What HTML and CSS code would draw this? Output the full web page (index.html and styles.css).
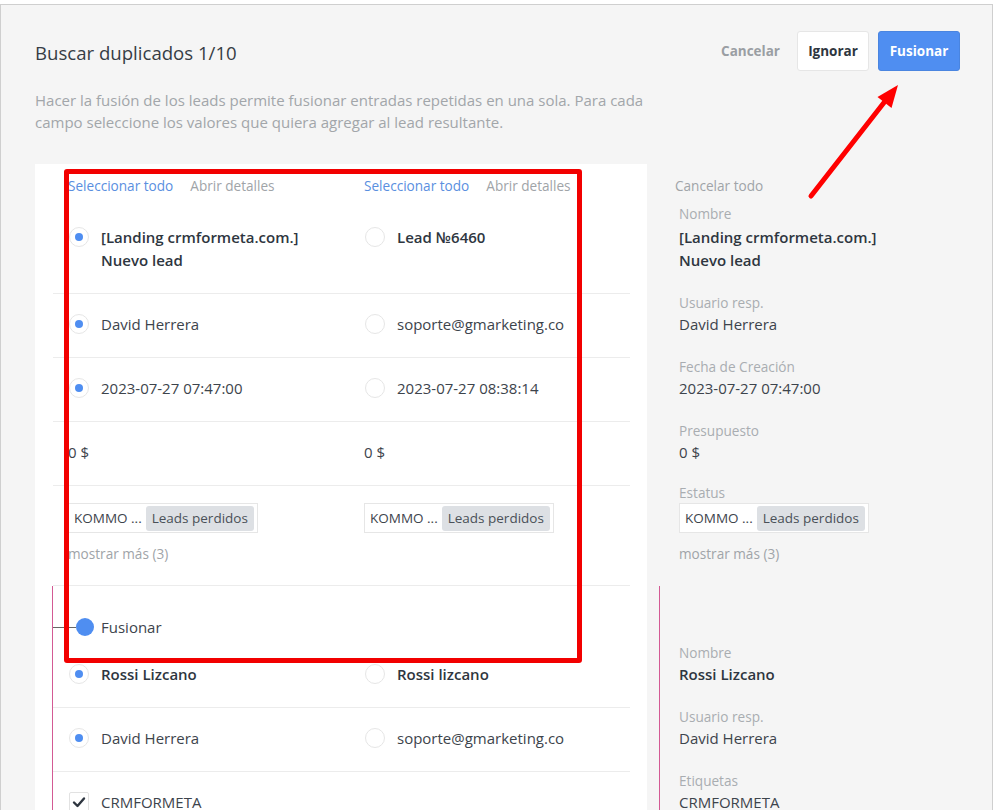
FILE: index.html
```html
<!DOCTYPE html>
<html lang="es">
<head>
<meta charset="utf-8">
<title>Buscar duplicados</title>
<link rel="stylesheet" href="styles.css">
</head>
<body>
<div class="modal">
  <header class="modal-head">
    <h1 class="title">Buscar duplicados 1/10</h1>
    <div class="actions">
      <button class="btn-link">Cancelar</button>
      <button class="btn btn-white">Ignorar</button>
      <button class="btn btn-blue">Fusionar</button>
    </div>
  </header>
  <p class="desc">Hacer la fusión de los leads permite fusionar entradas repetidas en una sola. Para cada campo seleccione los valores que quiera agregar al lead resultante.</p>

  <div class="merge">
    <!-- group 1 -->
    <div class="left">
      <div class="rows">
        <div class="row row-head">
          <div class="cell"><a class="link-blue">Seleccionar todo</a><a class="link-grey">Abrir detalles</a></div>
          <div class="cell"><a class="link-blue">Seleccionar todo</a><a class="link-grey">Abrir detalles</a></div>
        </div>
        <div class="row">
          <div class="cell"><span class="radio on"></span><span class="val bold">[Landing crmformeta.com.]<br>Nuevo lead</span></div>
          <div class="cell"><span class="radio"></span><span class="val bold">Lead №6460</span></div>
        </div>
        <div class="row">
          <div class="cell"><span class="radio on"></span><span class="val">David Herrera</span></div>
          <div class="cell"><span class="radio"></span><span class="val">soporte@gmarketing.co</span></div>
        </div>
        <div class="row">
          <div class="cell"><span class="radio on"></span><span class="val">2023-07-27 07:47:00</span></div>
          <div class="cell"><span class="radio"></span><span class="val">2023-07-27 08:38:14</span></div>
        </div>
        <div class="row">
          <div class="cell"><span class="val">0 $</span></div>
          <div class="cell"><span class="val">0 $</span></div>
        </div>
        <div class="row row-status">
          <div class="cell cell-col">
            <span class="status"><span class="status-pipe">KOMMO ...</span><span class="status-tag">Leads perdidos</span></span>
            <span class="more">mostrar más (3)</span>
          </div>
          <div class="cell cell-col">
            <span class="status"><span class="status-pipe">KOMMO ...</span><span class="status-tag">Leads perdidos</span></span>
          </div>
        </div>
      </div>
    </div>
    <div class="right">
      <div class="summary">
        <div class="summary-head">Cancelar todo</div>
        <div class="field field-first"><div class="label">Nombre</div><div class="value bold">[Landing crmformeta.com.]<br>Nuevo lead</div></div>
        <div class="field"><div class="label">Usuario resp.</div><div class="value">David Herrera</div></div>
        <div class="field"><div class="label">Fecha de Creación</div><div class="value">2023-07-27 07:47:00</div></div>
        <div class="field"><div class="label">Presupuesto</div><div class="value">0 $</div></div>
        <div class="field field-status"><div class="label">Estatus</div>
          <span class="status"><span class="status-pipe">KOMMO ...</span><span class="status-tag">Leads perdidos</span></span>
          <div class="more">mostrar más (3)</div>
        </div>
      </div>
    </div>

    <!-- group 2 -->
    <div class="left">
      <div class="rows rows-active">
        <div class="row row-merge">
          <div class="cell"><span class="connector"></span><span class="merge-dot"></span><span class="val">Fusionar</span></div>
        </div>
        <div class="row">
          <div class="cell"><span class="radio on"></span><span class="val bold">Rossi Lizcano</span></div>
          <div class="cell"><span class="radio"></span><span class="val bold">Rossi lizcano</span></div>
        </div>
        <div class="row">
          <div class="cell"><span class="radio on"></span><span class="val">David Herrera</span></div>
          <div class="cell"><span class="radio"></span><span class="val">soporte@gmarketing.co</span></div>
        </div>
        <div class="row">
          <div class="cell"><span class="check"><svg viewBox="0 0 20 20" width="20" height="20"><path d="M5 10.5 L8.5 14 L15 6.5" fill="none" stroke="#2e3640" stroke-width="2.4" stroke-linecap="round" stroke-linejoin="round"/></svg></span><span class="val">CRMFORMETA</span></div>
          <div class="cell"></div>
        </div>
      </div>
    </div>
    <div class="right">
      <div class="summary summary-active">
        <div class="field"><div class="label">Nombre</div><div class="value bold">Rossi Lizcano</div></div>
        <div class="field"><div class="label">Usuario resp.</div><div class="value">David Herrera</div></div>
        <div class="field"><div class="label">Etiquetas</div><div class="value">CRMFORMETA</div></div>
      </div>
    </div>
  </div>
</div>

<div class="highlight"></div>
<svg class="arrow" width="110" height="125" viewBox="0 0 110 125">
  <line x1="11" y1="116" x2="86" y2="20" stroke="#f00" stroke-width="5" stroke-linecap="round"/>
  <polygon points="98,5 77.5,17 91.5,28" fill="#f00"/>
</svg>
</body>
</html>
```

FILE: styles.css
```css
* { box-sizing: border-box; }
html, body { margin: 0; padding: 0; }
body {
  position: relative;
  background: #fff;
  font-family: "Open Sans", "Noto Sans", sans-serif;
  color: #313942;
  height: 810px;
  overflow: hidden;
}
.modal {
  margin-top: 4px;
  width: 993px;
  min-height: 806px;
  background: #f5f5f5;
  border: 1px solid #cfcfcf;
  border-bottom: none;
  padding: 26px 32px 0 34px;
}
.modal-head {
  display: flex;
  justify-content: space-between;
  align-items: center;
}
.title {
  margin: 0;
  font-size: 18.6px;
  font-weight: 400;
  line-height: 24px;
  color: #363d45;
  padding-top: 3px;
}
.actions { display: flex; align-items: center; }
.btn-link {
  background: none;
  border: none;
  font-family: inherit;
  font-size: 13.5px;
  font-weight: 700;
  color: #9a9ea3;
  padding: 0;
  margin-right: 17px;
}
.btn {
  font-family: inherit;
  font-size: 13.5px;
  font-weight: 700;
  height: 40px;
  padding: 0;
  border-radius: 3px;
}
.btn-white {
  width: 72px;
  background: #fff;
  border: 1px solid #e6e6e6;
  color: #2e3640;
  margin-right: 9px;
}
.btn-blue {
  width: 82px;
  background: #4f8ef1;
  border: 1px solid #4a85e0;
  color: #fff;
}
.desc {
  margin: 18px 0 31px;
  max-width: 640px;
  font-size: 15px;
  line-height: 22px;
  color: #a2a6aa;
}

.merge {
  display: grid;
  grid-template-columns: 612px 1fr;
}
.left {
  background: #fff;
  padding: 0 17px;
}
.rows { border-left: 1px solid transparent; }
.rows-active { border-left-color: #d35a94; }
.row {
  display: grid;
  grid-template-columns: 296px 296px;
  padding: 19px 0 21px 15px;
  border-bottom: 1px solid #ececec;
  font-size: 15px;
  line-height: 23px;
}
.rows-active .row:last-child { border-bottom: none; }
.row-head {
  padding: 12px 0 11px 15px;
  border-bottom: none;
  font-size: 13.6px;
  line-height: 20px;
}
.cell { display: flex; align-items: flex-start; min-width: 0; }
.cell-col { flex-direction: column; }
.link-blue { color: #5a8fdf; margin-right: 17px; }
.link-grey { color: #a0a4a8; }
.radio {
  flex: none;
  width: 20px;
  height: 20px;
  margin: 1px 12px 0 1px;
  border: 1px solid #e6e6e6;
  border-radius: 50%;
  background: #fff;
  display: flex;
  align-items: center;
  justify-content: center;
}
.radio.on::after {
  content: "";
  width: 8px;
  height: 8px;
  border-radius: 50%;
  background: #4f8ef1;
}
.check {
  flex: none;
  width: 20px;
  height: 20px;
  margin: 1px 12px 0 1px;
  border: 1px solid #e2e2e2;
  border-radius: 2px;
  background: #fff;
  display: flex;
}
.check svg { margin: -1px; }
.val { color: #3d444c; }
.bold { font-weight: 600; color: #2e3640; }
.row-status { padding: 17px 0 20px 15px; }
.status {
  display: inline-flex;
  align-items: center;
  align-self: flex-start;
  height: 30px;
  padding: 0 3px 0 5px;
  background: #fff;
  border: 1px solid #e6e6e6;
  font-size: 13.5px;
  color: #3d444c;
}
.status-tag {
  margin-left: 4px;
  background: #dde0e4;
  border-radius: 3px;
  padding: 0 6px;
  line-height: 25px;
  color: #4a5058;
}
.more {
  margin-top: 10px;
  font-size: 13.6px;
  line-height: 22px;
  color: #a0a4a8;
}
.row-merge {
  padding: 30px 0 6px 0;
  line-height: 22px;
  border-bottom: none;
}
.connector {
  flex: none;
  width: 23px;
  height: 1px;
  margin-top: 11px;
  background: #666;
}
.merge-dot {
  flex: none;
  width: 18px;
  height: 18px;
  margin: 2px 7px 0 0;
  border-radius: 50%;
  background: #4f8ef1;
}

.right { padding-left: 12px; }
.summary {
  border-left: 1px solid transparent;
  padding: 0 20px 21px 19px;
}
.summary-active { border-left-color: #d35a94; padding-top: 57px; }
.summary-head {
  margin-left: -4px;
  padding: 12px 0 8px;
  font-size: 13.6px;
  line-height: 20px;
  color: #a0a4a8;
}
.field { padding-bottom: 21px; }
.field-first .value { margin-top: 2px; }
.field-status { padding-bottom: 0; display: flex; flex-direction: column; margin-top: -2px; }
.label {
  font-size: 13.6px;
  line-height: 20px;
  color: #a9adb1;
}
.value {
  font-size: 15px;
  line-height: 23px;
  color: #3d444c;
}
.value.bold { color: #2e3640; }

.highlight {
  position: absolute;
  left: 64px;
  top: 169px;
  width: 518px;
  height: 494px;
  border: 5px solid #f20000;
  border-radius: 3px;
  pointer-events: none;
}
.arrow {
  position: absolute;
  left: 800px;
  top: 80px;
  pointer-events: none;
}
```
